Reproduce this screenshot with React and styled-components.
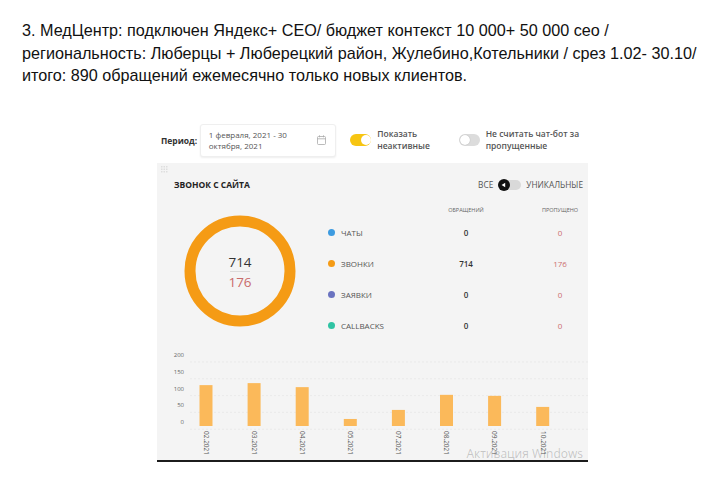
import React from "react";
import styled, { createGlobalStyle } from "styled-components";

const GlobalStyle = createGlobalStyle`
  html, body {
    margin: 0;
    background: #fff;
  }
  body {
    width: 716px;
    height: 486px;
    overflow: hidden;
    font-family: "Open Sans", "Liberation Sans", sans-serif;
  }
`;

const channels = [
  { name: "ЧАТЫ", color: "#3d9be0", total: 0, missed: 0 },
  { name: "ЗВОНКИ", color: "#f59b15", total: 714, missed: 176 },
  { name: "ЗАЯВКИ", color: "#6a73c0", total: 0, missed: 0 },
  { name: "CALLBACKS", color: "#2fc3a3", total: 0, missed: 0 },
];

const months = [
  { label: "02.2021", value: 122 },
  { label: "03.2021", value: 128 },
  { label: "04.2021", value: 116 },
  { label: "05.2021", value: 21 },
  { label: "07.2021", value: 48 },
  { label: "08.2021", value: 93 },
  { label: "09.2021", value: 90 },
  { label: "10.2021", value: 57 },
];

const Page = styled.div`
  padding: 19px 0 0 22px;
`;

const Intro = styled.p`
  margin: 0;
  font-family: "Liberation Sans", Arial, sans-serif;
  font-size: 16.2px;
  line-height: 22.5px;
  color: #111;
  white-space: nowrap;
`;

const Board = styled.div`
  margin: 37px 0 0 135px;
  width: 431px;
`;

const Filters = styled.div`
  display: flex;
  align-items: center;
  height: 33px;
  padding-left: 4px;
`;

const FilterLabel = styled.span`
  width: 39px;
  font-size: 8.5px;
  font-weight: 700;
  color: #333;
`;

const DateBox = styled.div`
  box-sizing: border-box;
  width: 137px;
  height: 33px;
  padding: 0 9px 0 8px;
  display: flex;
  align-items: center;
  justify-content: space-between;
  background: #fff;
  border: 1px solid #efefef;
  border-radius: 3px;
  box-shadow: 0 1px 2px rgba(0, 0, 0, 0.07);
  font-size: 8px;
  line-height: 11px;
  color: #555;
`;

const Option = styled.div`
  display: flex;
  align-items: center;
  gap: 6px;
  width: ${(p) => p.$width}px;
  margin-left: ${(p) => p.$offset || 0}px;
  font-size: 8.5px;
  line-height: 12px;
  font-weight: 600;
  color: #555;
`;

const Switch = styled.span`
  position: relative;
  flex: none;
  width: 21px;
  height: 12px;
  border-radius: 6px;
  background: ${(p) => (p.$on ? "#f7c512" : "#dcdcdc")};

  &::after {
    content: "";
    position: absolute;
    top: 1px;
    ${(p) => (p.$on ? "right: 0px;" : "left: 1px;")}
    width: 10px;
    height: 10px;
    border-radius: 50%;
    background: #fff;
    box-shadow: ${(p) => (p.$on ? "none" : "0 0 1px rgba(0,0,0,0.3)")};
  }
`;

const Card = styled.section`
  position: relative;
  margin-top: 6px;
  height: 297px;
  background: #f4f4f4;
  border-bottom: 2px solid #1c1c1c;
`;

const Grip = styled.svg`
  position: absolute;
  top: 3px;
  left: 4px;
`;

const CardHeader = styled.div`
  display: flex;
  align-items: center;
  justify-content: space-between;
  height: 12px;
  padding: 16px 5px 0 17px;
`;

const CardTitle = styled.h2`
  margin: 0;
  font-size: 8.5px;
  font-weight: 700;
  color: #222;
`;

const Mode = styled.div`
  display: flex;
  align-items: center;
  gap: 5px;
  font-size: 8.3px;
  color: #555;
`;

const ModeSwitch = styled.span`
  position: relative;
  width: 23px;
  height: 12px;

  &::before {
    content: "";
    position: absolute;
    top: 1px;
    left: 6px;
    width: 17px;
    height: 10px;
    border-radius: 5px;
    background: #d9d9d9;
  }
`;

const ModeKnob = styled.svg`
  position: absolute;
  left: 0;
  top: 0;
`;

const Body = styled.div`
  display: grid;
  grid-template-columns: 171px 1fr;
  margin-top: 11.5px;
`;

const DonutCell = styled.div`
  padding: 11px 0 0 24.5px;
`;

const Table = styled.div`
  display: grid;
  grid-template-columns: 116px 44px 50px 44px;
  grid-template-rows: 15px repeat(4, 31px);
  align-items: center;
`;

const ColHead = styled.span`
  grid-column: ${(p) => p.$col};
  font-size: 5.5px;
  color: #666;
  text-align: center;
  white-space: nowrap;
`;

const Channel = styled.span`
  display: flex;
  align-items: center;
  gap: 6px;
  font-size: 8px;
  color: #555;
`;

const Dot = styled.i`
  width: 7px;
  height: 7px;
  border-radius: 50%;
  background: ${(p) => p.$color};
`;

const Cell = styled.span`
  grid-column: ${(p) => p.$col};
  text-align: center;
  font-size: 8px;
  font-weight: ${(p) => (p.$missed ? 400 : 600)};
  color: ${(p) => (p.$missed ? "#cc6f6f" : "#333")};
`;

const Chart = styled.svg`
  display: block;
  margin-top: 4.5px;
`;

const Watermark = styled.span`
  position: absolute;
  right: 5px;
  bottom: -1px;
  font-family: "Open Sans", sans-serif;
  font-size: 12px;
  line-height: 14px;
  color: rgba(0, 0, 0, 0.2);
`;

const CalendarIcon = () => (
  <svg width="9" height="10" viewBox="0 0 9 10" fill="none" stroke="#aaa" strokeWidth="0.8">
    <rect x="0.5" y="1.5" width="8" height="8" rx="1" />
    <line x1="0.5" y1="3.8" x2="8.5" y2="3.8" />
    <line x1="2.5" y1="0.3" x2="2.5" y2="2.3" />
    <line x1="6.5" y1="0.3" x2="6.5" y2="2.3" />
  </svg>
);

const Donut = () => (
  <svg width="116" height="116" viewBox="0 0 116 116">
    <circle cx="58" cy="58" r="50" fill="none" stroke="#f59b15" strokeWidth="11" />
    <text x="58" y="53.5" textAnchor="middle" fontSize="13.5" fill="#333" fontFamily="Open Sans">
      714
    </text>
    <line x1="48" y1="58.5" x2="68" y2="58.5" stroke="#d4d4d4" strokeWidth="0.8" />
    <text x="58" y="73.5" textAnchor="middle" fontSize="13.5" fill="#c96a6a" fontFamily="Open Sans">
      176
    </text>
  </svg>
);

const ticks = [200, 150, 100, 50, 0];
const BASE = 80;
const SCALE = 0.335;

const BarChart = () => (
  <Chart width="431" height="114" viewBox="0 0 431 114">
    {ticks.map((t, i) => (
      <g key={t}>
        <text
          x="27"
          y={11 + i * 16.8}
          textAnchor="end"
          fontSize="6"
          fill="#666"
          fontFamily="Open Sans"
        >
          {t}
        </text>
        <line
          x1="33"
          x2="431"
          y1={16 + i * 16.8}
          y2={16 + i * 16.8}
          stroke="#e3e3e3"
          strokeWidth="0.6"
          strokeDasharray="2 2"
        />
      </g>
    ))}
    {months.map((m, i) => {
      const cx = 49 + i * 48.1;
      const h = m.value * SCALE;
      return (
        <g key={m.label}>
          <rect x={cx - 6.5} y={BASE - h} width="13" height={h} fill="#fbb95a" />
          <text
            x={cx - 2.2}
            y="85"
            fontSize="6.5"
            fill="#555"
            fontFamily="Open Sans"
            transform={`rotate(90 ${cx - 2.2} 85)`}
          >
            {m.label}
          </text>
        </g>
      );
    })}
  </Chart>
);

export default function App() {
  return (
    <Page>
      <GlobalStyle />
      <Intro>
        3. МедЦентр: подключен Яндекс+ СЕО/ бюджет контекст 10 000+ 50 000 сео /
        <br />
        регионaльность: Люберцы + Люберецкий район, Жулебино,Котельники / срез 1.02- 30.10/
        <br />
        итого: 890 обращений ежемесячно только новых клиентов.
      </Intro>

      <Board>
        <Filters>
          <FilterLabel>Период:</FilterLabel>
          <DateBox>
            <span>
              1 февраля, 2021 - 30
              <br />
              октября, 2021
            </span>
            <CalendarIcon />
          </DateBox>
          <Option $width={109} $offset={14}>
            <Switch $on />
            <span>
              Показать
              <br />
              неактивные
            </span>
          </Option>
          <Option $width={130}>
            <Switch />
            <span>
              Не считать чат-бот за
              <br />
              пропущенные
            </span>
          </Option>
        </Filters>

        <Card>
          <Grip width="7" height="7" viewBox="0 0 7 7">
            {[0, 1, 2].flatMap((r) =>
              [0, 1, 2].map((c) => (
                <rect key={`${r}${c}`} x={c * 2.5} y={r * 2.5} width="1.5" height="1.5" fill="#dedede" />
              ))
            )}
          </Grip>

          <CardHeader>
            <CardTitle>ЗВОНОК С САЙТА</CardTitle>
            <Mode>
              <span>ВСЕ</span>
              <ModeSwitch>
                <ModeKnob width="12" height="12" viewBox="0 0 12 12">
                  <circle cx="6" cy="6" r="6" fill="#111" />
                  <path d="M3.6 6 L7.2 3.8 L7.2 8.2 Z" fill="#fff" />
                </ModeKnob>
              </ModeSwitch>
              <span>УНИКАЛЬНЫЕ</span>
            </Mode>
          </CardHeader>

          <Body>
            <DonutCell>
              <Donut />
            </DonutCell>
            <Table>
              <ColHead $col={2}>ОБРАЩЕНИЙ</ColHead>
              <ColHead $col={4}>ПРОПУЩЕНО</ColHead>
              {channels.map((ch) => (
                <React.Fragment key={ch.name}>
                  <Channel>
                    <Dot $color={ch.color} />
                    {ch.name}
                  </Channel>
                  <Cell $col={2}>{ch.total}</Cell>
                  <Cell $col={4} $missed>
                    {ch.missed}
                  </Cell>
                </React.Fragment>
              ))}
            </Table>
          </Body>

          <BarChart />
          <Watermark>Активация Windows</Watermark>
        </Card>
      </Board>
    </Page>
  );
}
